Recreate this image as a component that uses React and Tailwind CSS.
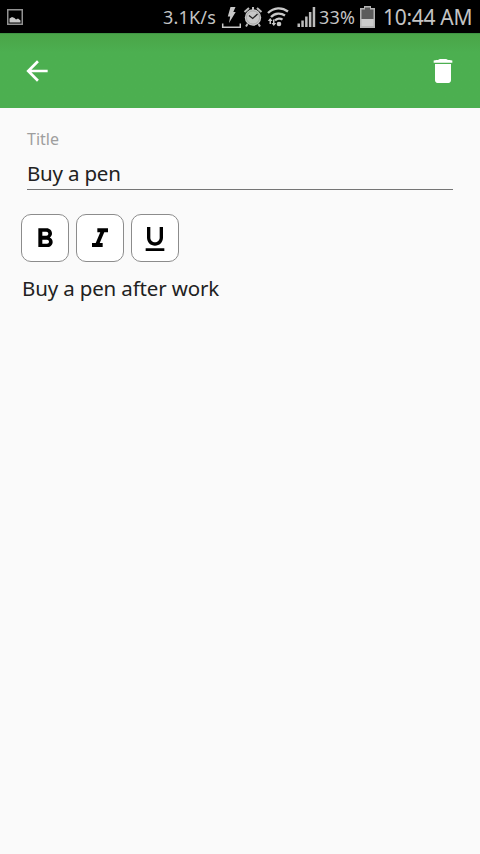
const MaterialIcon = ({ d, className }) => (
  <svg viewBox="0 0 24 24" fill="currentColor" className={className} aria-hidden="true">
    <path d={d} />
  </svg>
);

const ICONS = {
  back: "M20 11H7.83l5.590-5.590L12 4l-8 8 8 8 1.410-1.410L7.830 13H20v-2z",
  trash:
    "M6 18.800c0 1.200.700 2.200 1.900 2.200h8.200c1.200 0 1.900-1 1.900-2.200V6.700H6zM19 4.100c-1.500-.2-2.800-.3-3.600-.5l-1-.6H9.600l-1 .6c-.8.200-2.100.3-3.600.5v1.800h14z",
  bold: "M15.6 10.79c.97-.67 1.65-1.77 1.65-2.79 0-2.260-1.750-4-4-4H7v14h7.040c2.090 0 3.710-1.700 3.710-3.790 0-1.520-.860-2.820-2.150-3.420zM10 6.500h3c.830 0 1.500.670 1.500 1.500s-.670 1.500-1.500 1.500h-3v-3zm3.500 9H10v-3h3.500c.830 0 1.500.670 1.500 1.500s-.670 1.500-1.500 1.500z",
  italic: "M10 4v3h2.210l-3.420 8H6v3h8v-3h-2.210l3.420-8H18V4z",
  underline:
    "M12 17c3.310 0 6-2.690 6-6V3h-2.500v8c0 1.930-1.570 3.500-3.500 3.500S8.500 12.930 8.500 11V3H6v8c0 3.310 2.690 6 6 6zm-7 2v2h14v-2H5z",
};

const formats = [
  { label: "Bold", icon: ICONS.bold },
  { label: "Italic", icon: ICONS.italic },
  { label: "Underline", icon: ICONS.underline },
];

const StatusBar = () => (
  <div className="flex h-[33px] items-center bg-black pl-[7px] text-[#c4c4c4]">
    <svg viewBox="0 0 16 16" className="h-4 w-4 shrink-0" fill="none">
      <rect x="0.75" y="0.75" width="14.500" height="14.500" stroke="#929292" strokeWidth="1.500" />
      <path d="M2.500 13.500V9.500L5 8l2.500 1 1.500 1.500 2-1 2.500 2v2z" fill="#c8c8c8" />
    </svg>
    <span className="ml-[140px] w-[54px] shrink-0 whitespace-nowrap text-[18px] leading-6 tracking-[0.2px]">
      3.1K/s
    </span>
    <svg viewBox="0 0 20 24" className="ml-[4px] h-6 w-5 shrink-0" fill="none">
      <path d="M9.500 2h5l-2.200 5h2.400L8 18l1.200-6.500H6.800z" fill="#c8c8c8" />
      <path d="M1.700 18.500v3.700h17.600v-3.700" stroke="#c8c8c8" strokeWidth="1.500" />
    </svg>
    <svg viewBox="0 0 20 22" className="ml-[2px] h-[22px] w-5 shrink-0" fill="none">
      <path d="M1.500 6l4.500-4M18.500 6L14 2" stroke="#bcbcbc" strokeWidth="2" />
      <path d="M10 1v3" stroke="#bcbcbc" strokeWidth="2" />
      <circle cx="10" cy="11.500" r="8.200" fill="#c8c8c8" />
      <circle cx="10" cy="11.500" r="6.600" stroke="#999" strokeWidth="0.7" />
      <path d="M6 9.500l3.700 3 4.800-4.500" stroke="#222" strokeWidth="1.300" />
      <path d="M4.500 18l-1.500 2.500M15.500 18l1.500 2.500" stroke="#bcbcbc" strokeWidth="2" />
    </svg>
    <svg viewBox="0 0 22 20" className="ml-[4px] h-5 w-[22px] shrink-0" fill="none">
      <g stroke="#c8c8c8" strokeWidth="2.300">
        <path d="M1 6c6-6 14-6 20-1.500" />
        <path d="M4 10c4-4.300 10-4.300 14-1.500" />
        <path d="M8 13.500c2-2.300 5.500-2.300 7.500-.8" />
      </g>
      <circle cx="12" cy="17" r="2.300" fill="#c8c8c8" />
      <path d="M2.500 17v-3H.8l2.400-3 2.400 3H4v3zM6 12.500h1.500v3.500h1.700l-2.400 3-2.400-3H6z" fill="#c8c8c8" />
    </svg>
    <svg viewBox="0 0 19 22" className="ml-[8px] h-[22px] w-[19px] shrink-0" fill="#bcbcbc">
      <path d="M0.500 17.500h2.500V21H.5zM4.300 14.500h2.500V21H4.300zM8.100 10.500h2.500V21H8.100zM11.900 6h2.500v15h-2.500zM15.700 1h2.500v20h-2.500z" />
    </svg>
    <span className="ml-[3px] w-[38px] shrink-0 whitespace-nowrap text-[18px] leading-6 tracking-[0.2px]">
      33%
    </span>
    <svg viewBox="0 0 15 22" className="ml-[3px] h-[22px] w-[15px] shrink-0">
      <path d="M4 0h7v2h4v20H0V2h4z" fill="#b4b4b4" />
      <path d="M5 1.500h5v2h3.500V13h-12V3.500H5z" fill="#5c5c5c" />
      <path d="M1.500 13h12v7h-12z" fill="#cccccc" />
    </svg>
    <span className="ml-[8px] whitespace-nowrap text-[21px] leading-7 tracking-[-0.3px]">
      10:44 AM
    </span>
  </div>
);

const App = () => {
  return (
    <div className="flex h-screen w-full flex-col overflow-hidden bg-[#fafafa] font-['Noto_Sans',sans-serif] text-[#212121]">
      <StatusBar />
      <header className="flex h-[75px] items-center justify-between border-t border-[#3f9444] bg-linear-to-b from-[#4aa548] to-[#4caf50] to-25% pl-[21px] pr-[21px] text-white">
        <button aria-label="Back">
          <MaterialIcon d={ICONS.back} className="h-8 w-8" />
        </button>
        <button aria-label="Delete note">
          <MaterialIcon d={ICONS.trash} className="h-8 w-8" />
        </button>
      </header>
      <main className="px-[21px] pt-[20px]">
        <div className="mx-[6px] flex h-[62px] flex-col border-b border-[#757575]">
          <label className="text-base leading-[22px] text-[#9e9e9e]">Title</label>
          <p className="mt-[9px] text-[20.5px] leading-7 tracking-[-0.2px]">Buy a pen</p>
        </div>
        <div className="mt-6 flex gap-[7px]">
          {formats.map(({ label, icon }) => (
            <button
              key={label}
              aria-label={label}
              className="flex h-12 w-12 items-center justify-center rounded-[10px] border border-[#8c8c8c] bg-white pt-px text-black"
            >
              <MaterialIcon d={icon} className="h-8 w-8" />
            </button>
          ))}
        </div>
        <p className="ml-px mt-[12px] whitespace-nowrap text-[20.5px] leading-7 tracking-[-0.15px]">
          Buy a pen after work
        </p>
      </main>
    </div>
  );
};

export default App;
